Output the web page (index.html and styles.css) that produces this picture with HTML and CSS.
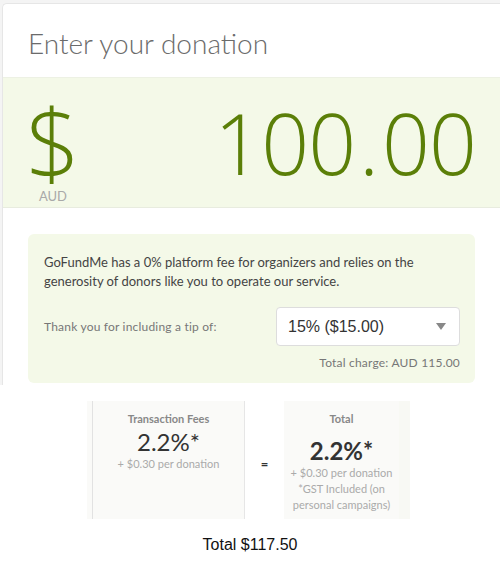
FILE: index.html
```html
<!DOCTYPE html>
<html lang="en">
<head>
  <meta charset="UTF-8">
  <meta name="viewport" content="width=device-width, initial-scale=1">
  <title>Enter your donation</title>
  <link rel="stylesheet" href="styles.css">
</head>
<body>

  <div class="frame">
    <div class="donation-card">
      <h1 class="donation-title">Enter your donation</h1>

      <div class="amount-band">
        <div class="currency">
          <span class="currency-sign">$</span>
          <span class="currency-code">AUD</span>
        </div>
        <div class="amount">
          <span class="amount-int">100</span><span class="amount-dot">.</span><span class="amount-dec">00</span>
        </div>
      </div>

      <div class="tip-box">
        <p class="tip-note">GoFundMe has a 0% platform fee for organizers and relies on the generosity of donors like you to operate our service.</p>
        <div class="tip-row">
          <span class="tip-label">Thank you for including a tip of:</span>
          <div class="tip-select">
            <span>15% ($15.00)</span>
            <span class="tip-arrow"></span>
          </div>
        </div>
        <div class="tip-total">Total charge: AUD 115.00</div>
      </div>
    </div>
  </div>

  <div class="fees">
    <div class="fees-col fees-left">
      <div class="fees-head">Transaction Fees</div>
      <div class="fees-rate">2.2%*</div>
      <div class="fees-small">+ $0.30 per donation</div>
    </div>
    <div class="fees-eq">=</div>
    <div class="fees-col fees-right">
      <div class="fees-head">Total</div>
      <div class="fees-rate fees-bold">2.2%*</div>
      <div class="fees-small">+ $0.30 per donation<br>*GST Included (on personal campaigns)</div>
    </div>
    <div class="fees-edge"></div>
  </div>

  <div class="grand-total">Total $117.50</div>

</body>
</html>
```

FILE: styles.css
```css
:root {
  --green: #5b7f08;
  --green-bg: #f4f9e8;
  --line: #e6e6e6;
  --muted: #777;
  --font-main: 'Lato', 'Open Sans', Arial, sans-serif;
}

body {
  margin: 0;
  background: #fff;
  font-family: var(--font-main);
  color: #333;
}

/* bloc du haut */
.frame {
  background: #f4f4f4;
  padding: 3px 0 0 2px;
}

.donation-card {
  background: #fff;
  border-top: 1px solid var(--line);
  border-left: 1px solid var(--line);
  border-top-left-radius: 5px;
  padding-bottom: 2px;
}

.donation-title {
  margin: 0;
  height: 73px;
  padding: 22px 0 0 25px;
  box-sizing: border-box;
  font-size: 28px;
  font-weight: 300;
  color: #6b6b6b;
  line-height: 34px;
}

.amount-band {
  background: var(--green-bg);
  border-top: 1px solid #edf1e4;
  border-bottom: 1px solid #e8ecdf;
  height: 131px;
  box-sizing: border-box;
  display: flex;
  justify-content: space-between;
  color: var(--green);
}

.currency {
  display: flex;
  flex-direction: column;
  align-items: center;
  width: 50px;
  margin-left: 25px;
}

.currency-sign {
  font-family: 'Open Sans', sans-serif;
  font-weight: 300;
  font-size: 96px;
  line-height: 96px;
  margin-top: 15px;
}

.currency-code {
  font-size: 13px;
  color: #a9a9a9;
  line-height: 14px;
}

.amount {
  font-family: 'Open Sans', sans-serif;
  font-weight: 300;
  font-size: 84px;
  line-height: 100px;
  margin: 15px 24px 0 0;
  letter-spacing: -1px;
}

.amount-dot {
  margin: 0 4px;
}

/* pourboire */
.tip-box {
  background: var(--green-bg);
  border-radius: 6px;
  margin: 26px 25px 0 25px;
  padding: 19px 15px 14px 16px;
  height: 149px;
  box-sizing: border-box;
}

.tip-note {
  margin: 0;
  font-size: 13px;
  line-height: 19px;
  color: #444;
}

.tip-row {
  display: flex;
  align-items: center;
  justify-content: space-between;
  margin-top: 16px;
}

.tip-label {
  font-size: 12px;
  color: var(--muted);
  letter-spacing: 0.2px;
}

.tip-select {
  width: 184px;
  height: 39px;
  box-sizing: border-box;
  background: #fff;
  border: 1px solid #ddd;
  border-radius: 4px;
  display: flex;
  align-items: center;
  justify-content: space-between;
  padding: 0 13px 0 11px;
  font-family: Arial, 'Liberation Sans', sans-serif;
  font-size: 16px;
  color: #333;
}

.tip-arrow {
  width: 0;
  height: 0;
  border-left: 5px solid transparent;
  border-right: 5px solid transparent;
  border-top: 7px solid #888;
}

.tip-total {
  text-align: right;
  font-size: 12px;
  color: var(--muted);
  margin-top: 9px;
  letter-spacing: 0.2px;
}

/* tableau des frais */
.fees {
  display: flex;
  margin: 16px 0 0 87px;
  height: 118px;
  text-align: center;
}

.fees-col {
  background: #fafaf8;
  box-sizing: border-box;
  padding-top: 11px;
}

.fees-left {
  width: 158px;
  border-left: 5px solid #fafaf8;
  box-shadow: inset 1px 0 0 #e2e2e2, inset -1px 0 0 #e6e6e6;
}

.fees-right {
  width: 115px;
}

.fees-eq {
  width: 39px;
  padding-top: 55px;
  font-weight: bold;
  font-size: 13px;
  color: #333;
}

.fees-edge {
  width: 11px;
  background: #f8f9f4;
}

.fees-head {
  font-size: 11px;
  font-weight: bold;
  color: #888;
  line-height: 14px;
}

.fees-rate {
  font-size: 24px;
  color: #333;
  line-height: 28px;
  margin-top: 2px;
}

.fees-bold {
  font-weight: bold;
  margin-top: 11px;
}

.fees-small {
  font-size: 11px;
  color: #aaa;
  line-height: 16px;
}

.grand-total {
  text-align: center;
  font-family: Arial, 'Liberation Sans', sans-serif;
  font-size: 16px;
  color: #111;
  margin-top: 17px;
}
```
